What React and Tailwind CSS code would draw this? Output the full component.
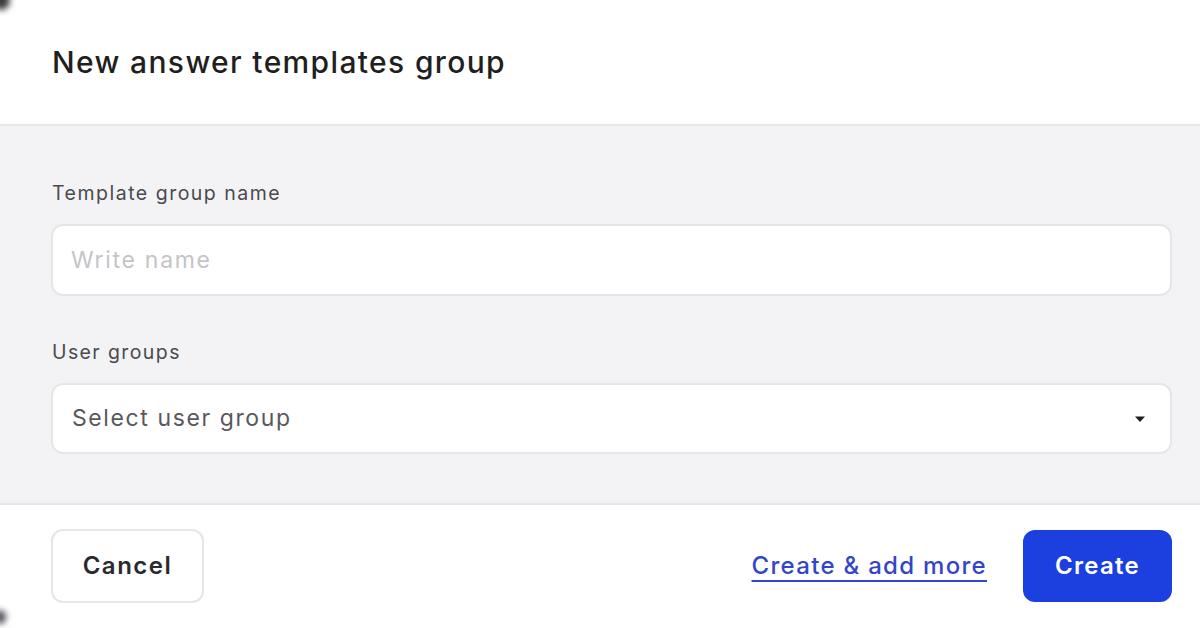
export default function App() {
  return (
    <div
      className="w-[1200px] h-[628px] bg-white flex flex-col overflow-hidden relative"
      style={{ fontFamily: 'Inter, "Noto Sans", sans-serif' }}
    >
      <div className="absolute -left-[8px] -top-[8px] w-[18px] h-[18px] rounded-full bg-[#3a3a3e] blur-[3px]" />
      <div className="absolute -left-[6px] top-[610px] w-[12px] h-[14px] rounded-full bg-[#55565c] blur-[3px]" />
      <div className="h-[126px] shrink-0 flex items-center pl-[52px] border-b-2 border-[#e8e8ea]">
        <h1 className="text-[30px] font-medium text-[#1f1f22] tracking-[1.35px]">
          New answer templates group
        </h1>
      </div>
      <div className="h-[377px] shrink-0 bg-[#f3f3f5] pl-[51px] pr-[28px] pt-[54px] flex flex-col">
        <label className="text-[19.5px] text-[#4a4a4f] leading-[26px] pl-[1px] tracking-[1.5px]">Template group name</label>
        <div className="mt-[18px] h-[72px] w-full bg-white rounded-[12px] border-2 border-[#e6e6e9] flex items-center px-[18px]">
          <span className="text-[23px] text-[#c4c4c8] tracking-[1.7px]">Write name</span>
        </div>
        <label className="mt-[43px] text-[19.5px] text-[#4a4a4f] leading-[26px] pl-[1px] tracking-[1.4px]">User groups</label>
        <div className="mt-[18px] h-[71px] w-full bg-white rounded-[12px] border-2 border-[#e6e6e9] flex items-center justify-between pl-[19px] pr-[24px]">
          <span className="text-[23px] text-[#58585d] tracking-[1.6px]">Select user group</span>
          <svg width="12" height="8" viewBox="0 0 12 8">
            <path d="M1 1.5 L11 1.5 L6 7 Z" fill="#1f1f22" />
          </svg>
        </div>
      </div>
      <div className="flex-1 border-t-2 border-[#e6e6e9] flex items-center justify-between pl-[51px] pr-[28px] pb-[1px]">
        <button className="w-[153px] h-[74px] rounded-[12px] border-2 border-[#e6e6e9] bg-white text-[24px] font-semibold text-[#2a2a2e] tracking-[1.5px]">
          Cancel
        </button>
        <div className="flex items-center gap-[36px]">
          <span className="text-[24px] font-medium text-[#3346c8] underline underline-offset-[6px] decoration-[1.5px] tracking-[1.3px]">
            Create &amp; add more
          </span>
          <button className="w-[149px] h-[72px] rounded-[12px] bg-[#1c3fe0] text-white text-[24px] font-semibold tracking-[1.3px]">
            Create
          </button>
        </div>
      </div>
    </div>
  );
}
